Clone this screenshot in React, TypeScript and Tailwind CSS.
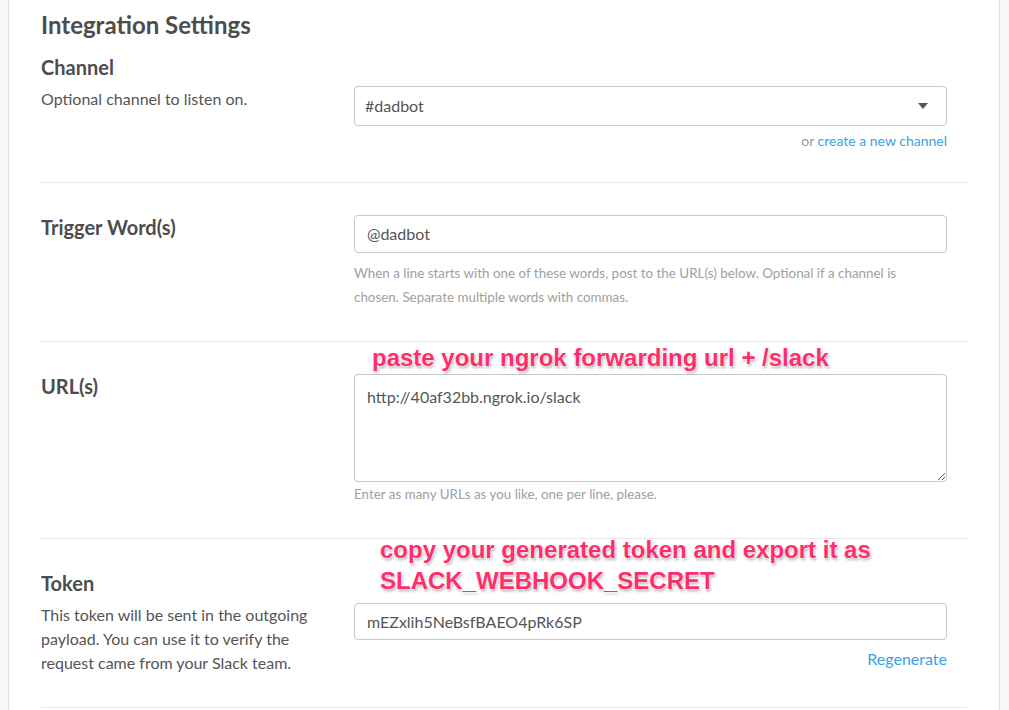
import React from 'react';

const note =
  "absolute font-['Liberation_Sans',Arial,sans-serif] font-bold text-[24px] leading-[31px] text-[#ff2d6b] whitespace-nowrap [text-shadow:0_0_2px_#fff,0_0_2px_#fff,0_0_1px_#fff,1px_2px_3px_rgba(0,0,0,0.35)]";

const label = 'text-[20px] leading-6 font-bold text-[#4d4d4d]';

function Caret() {
  return (
    <svg width="10" height="6" viewBox="0 0 10 6" className="shrink-0">
      <polygon points="0,0 10,0 5,6" fill="#555" />
    </svg>
  );
}

function Section({
  left,
  children,
  rightPad = 'pt-8',
}: {
  left: React.ReactNode;
  children: React.ReactNode;
  rightPad?: string;
}) {
  return (
    <div className="grid grid-cols-[313px_593px] border-t border-[#e8e8e8] pb-8">
      <div className="pt-8">{left}</div>
      <div className={rightPad}>{children}</div>
    </div>
  );
}

export default function App() {
  return (
    <div className="min-h-screen bg-[#f8f8f8] font-['Lato','Noto_Sans',sans-serif] text-[#555]">
      <div className="relative ml-2 w-[992px] min-h-[710px] border-x border-[#e2e2e2] bg-white pl-8 pr-8 pt-[11px]">
        <h1 className="text-[24px] leading-7 font-bold text-[#4d4d4d]">Integration Settings</h1>

        {/* channel */}
        <div className="grid grid-cols-[313px_593px] pt-4 pb-8">
          <div>
            <h3 className={`${label} mb-2`}>Channel</h3>
            <p className="text-[16px] leading-6">Optional channel to listen on.</p>
          </div>
          <div className="pt-[31px]">
            <div className="flex h-[40px] items-center justify-between rounded border border-[#c8c8c8] pl-[10px] pr-[18px] text-[16px]">
              <span>#dadbot</span>
              <Caret />
            </div>
            <p className="mt-[6px] text-right text-[14px] leading-[18px] text-[#9a9a9a]">
              or <span className="text-[#3aa3e3]">create a new channel</span>
            </p>
          </div>
        </div>

        {/* trigger words */}
        <Section left={<h3 className={label}>Trigger Word(s)</h3>}>
          <div className="flex h-[38px] items-center rounded border border-[#c8c8c8] px-3 text-[16px]">@dadbot</div>
          <p className="mt-2 text-[13.4px] leading-6 text-[#a0a0a0]">
            When a line starts with one of these words, post to the URL(s) below. Optional if a channel is
            <br />
            chosen. Separate multiple words with commas.
          </p>
        </Section>

        {/* urls */}
        <div className="relative">
          <Section left={<h3 className={label}>URL(s)</h3>}>
            <textarea
              readOnly
              defaultValue="http://40af32bb.ngrok.io/slack"
              className="block h-[108px] w-full resize-y rounded border border-[#c8c8c8] px-3 py-[11px] text-[16px] leading-[22px] text-[#555] outline-none font-['Lato','Noto_Sans',sans-serif]"
            />
            <p className="text-[13.4px] leading-6 text-[#a0a0a0]">Enter as many URLs as you like, one per line, please.</p>
          </Section>
          <div className={`${note} left-[331px] top-[1px]`}>paste your ngrok forwarding url + /slack</div>
        </div>

        {/* token */}
        <div className="relative">
          <Section
            rightPad="pt-16"
            left={
              <>
                <h3 className={`${label} mb-2`}>Token</h3>
                <p className="w-[275px] text-[16px] leading-6">
                  This token will be sent in the outgoing payload. You can use it to verify the request came from your
                  Slack team.
                </p>
              </>
            }
          >
            <div className="flex h-[37px] items-center rounded border border-[#c8c8c8] px-3 text-[16px]">
              mEZxlih5NeBsfBAEO4pRk6SP
            </div>
            <p className="mt-[7px] text-right text-[16px] leading-6 text-[#3aa3e3]">Regenerate</p>
          </Section>
          <div className={`${note} left-[339px] top-[-4px]`}>
            copy your generated token and export it as
            <br />
            SLACK_WEBHOOK_SECRET
          </div>
        </div>
        <div className="border-t border-[#e8e8e8]" />
      </div>
    </div>
  );
}
